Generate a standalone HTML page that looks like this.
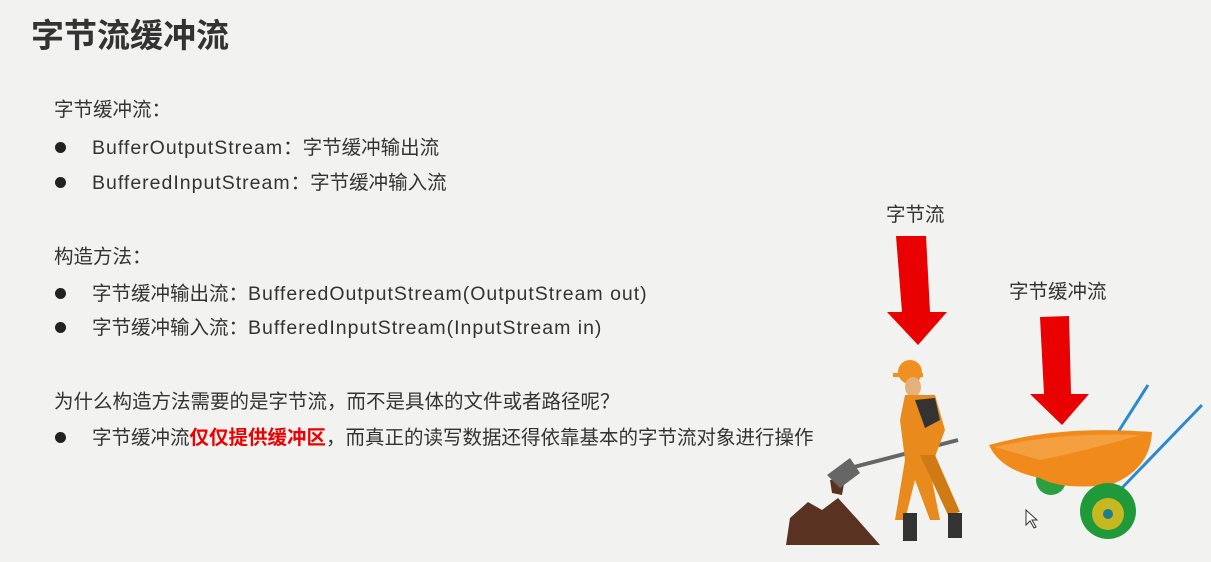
<!DOCTYPE html>
<html><head><meta charset="utf-8"><style>
body{margin:0;width:1211px;height:562px;background:#f2f3f1;position:relative;overflow:hidden;font-family:"Liberation Sans","Noto Sans CJK SC",sans-serif;color:#333}
.t{position:absolute;white-space:nowrap;font-size:19.5px;line-height:24px}
.e{letter-spacing:1px}
h1{position:absolute;left:31px;top:16px;margin:0;font-size:33px;font-weight:bold;color:#333;line-height:40px;font-family:"Liberation Sans","Noto Sans CJK SC",sans-serif}
.b{position:absolute;left:55px;width:11px;height:11px;border-radius:50%;background:#222}
.r{color:#e00;font-weight:bold}
</style></head><body>
<h1>字节流缓冲流</h1>
<div class="t" style="left:54px;top:98px">字节缓冲流：</div>
<div class="b" style="top:142px"></div><div class="t" style="left:92px;top:136px"><span class="e">BufferOutputStream</span>：字节缓冲输出流</div>
<div class="b" style="top:177px"></div><div class="t" style="left:92px;top:171px"><span class="e">BufferedInputStream</span>：字节缓冲输入流</div>
<div class="t" style="left:54px;top:245px">构造方法：</div>
<div class="b" style="top:288px"></div><div class="t" style="left:92px;top:282px">字节缓冲输出流：<span class="e">BufferedOutputStream(OutputStream out)</span></div>
<div class="b" style="top:322px"></div><div class="t" style="left:92px;top:316px">字节缓冲输入流：<span class="e">BufferedInputStream(InputStream in)</span></div>
<div class="t" style="left:54px;top:390px">为什么构造方法需要的是字节流，而不是具体的文件或者路径呢？</div>
<div class="b" style="top:432px"></div><div class="t" style="left:92px;top:426px">字节缓冲流<span class="r">仅仅提供缓冲区</span>，而真正的读写数据还得依靠基本的字节流对象进行操作</div>
<div class="t" style="left:886px;top:203px">字节流</div>
<div class="t" style="left:1009px;top:280px">字节缓冲流</div>
<svg style="position:absolute;left:0;top:0" width="1211" height="562">
<polygon points="896,236 926,236 930,312 947,312 918,345 887,312 902,312" fill="#e90000"/>
<polygon points="1040,317 1069,316 1071,394 1089,394 1062,425 1030,394 1044,394" fill="#e90000"/>
<polygon points="786,545 790,518 808,502 822,510 838,498 858,520 880,545" fill="#5a3222"/>
<polygon points="830,480 845,478 842,495 832,493" fill="#5a3222"/>
<line x1="850" y1="468" x2="958" y2="440" stroke="#666" stroke-width="4"/>
<polygon points="827,475 850,458 860,473 840,488" fill="#666"/>
<circle cx="910" cy="372" r="12" fill="#f09020"/>
<rect x="893" y="373" width="30" height="4" fill="#f09020"/>
<ellipse cx="913" cy="387" rx="8" ry="10" fill="#e6b07a"/>
<polygon points="905,395 935,395 945,430 930,470 940,520 930,520 915,480 905,520 895,520 905,460 900,420" fill="#e88a1c"/>
<polygon points="915,400 935,398 940,420 925,428" fill="#333"/>
<polygon points="920,455 935,455 960,512 948,515" fill="#d07a15"/>
<rect x="903" y="513" width="14" height="28" fill="#333"/><rect x="948" y="513" width="14" height="25" fill="#333"/>
<line x1="1113" y1="440" x2="1148" y2="385" stroke="#2a8ad0" stroke-width="3"/>
<line x1="1120" y1="490" x2="1202" y2="405" stroke="#2a8ad0" stroke-width="3"/>
<circle cx="1051" cy="480" r="15" fill="#2aa040"/>
<path d="M989,445 Q1060,425 1152,432 Q1150,470 1110,485 Q1060,490 1040,478 Q1000,470 989,445Z" fill="#f08a1a"/>
<path d="M995,447 Q1060,432 1140,435 Q1090,450 1040,460Z" fill="#f5a040"/>
<circle cx="1108" cy="511" r="28" fill="#1f9a3a"/>
<circle cx="1108" cy="514" r="16" fill="#c8b820"/>
<circle cx="1108" cy="514" r="5" fill="#1a8090"/>
<path d="M1026,510 v15 l4,-4 l4,7 l2,-1 l-4,-7 h5z" fill="#fff" stroke="#333"/>
</svg>
</body></html>
